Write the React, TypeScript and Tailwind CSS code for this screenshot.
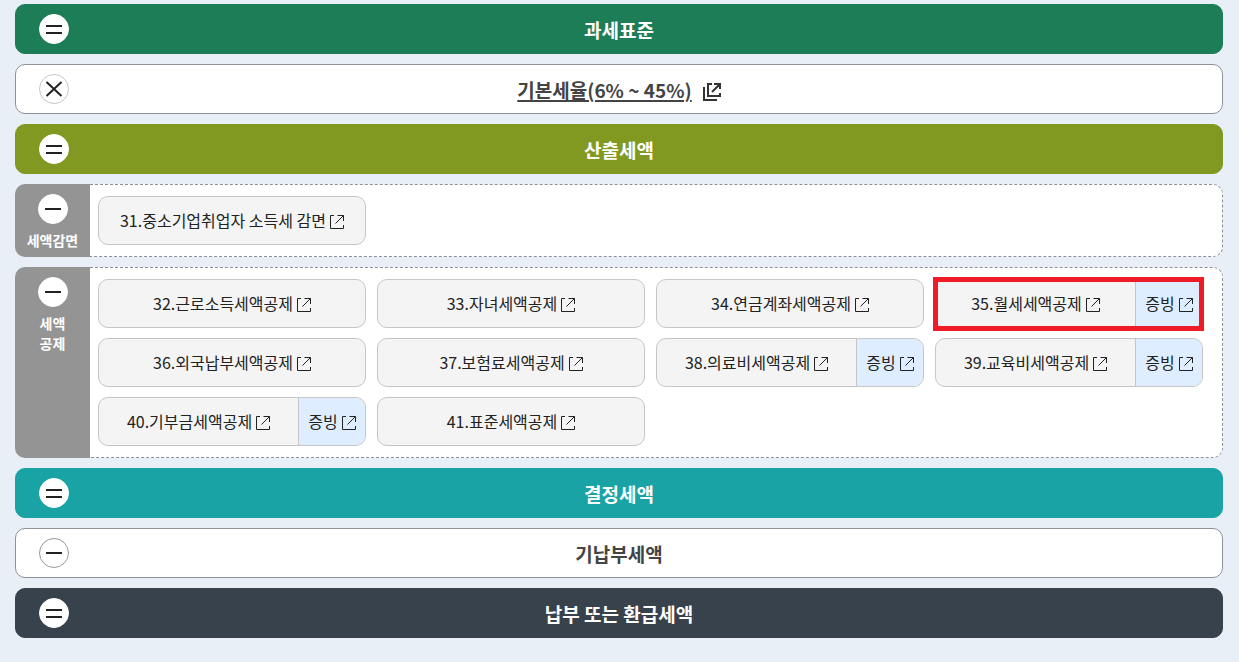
import React from 'react';

type Sign = 'equal' | 'minus' | 'times';

type Item = {
  label: string;
  proof?: boolean;
  marked?: boolean;
};

const reliefItems: Item[] = [{ label: '31.중소기업취업자 소득세 감면' }];

const creditItems: Item[] = [
  { label: '32.근로소득세액공제' },
  { label: '33.자녀세액공제' },
  { label: '34.연금계좌세액공제' },
  { label: '35.월세세액공제', proof: true, marked: true },
  { label: '36.외국납부세액공제' },
  { label: '37.보험료세액공제' },
  { label: '38.의료비세액공제', proof: true },
  { label: '39.교육비세액공제', proof: true },
  { label: '40.기부금세액공제', proof: true },
  { label: '41.표준세액공제' },
];

const signPaths: Record<Sign, string> = {
  equal: 'M7 12H23M7 19H23',
  minus: 'M7 15H23',
  times: 'M7.5 8L22.5 22M22.5 8L7.5 22',
};

function SignIcon({ sign, border = 'border-white' }: { sign: Sign; border?: string }) {
  return (
    <span className={`block size-[30px] shrink-0 rounded-full border bg-white ${border}`}>
      <svg viewBox="1 1 28 28" className="size-7" fill="none" stroke="#222" strokeWidth="2">
        <path d={signPaths[sign]} />
      </svg>
    </span>
  );
}

function LinkIcon() {
  return (
    <svg viewBox="0 0 14 14" className="mt-1 size-3.5 shrink-0" fill="none" stroke="#222">
      <path d="M4 .5H.5V13.5H13.5V10M7.5 .5H13.5V6M13.5 .5L5.5 8.5" />
    </svg>
  );
}

function Bar({
  sign,
  className,
  signBorder,
  children,
}: {
  sign: Sign;
  className: string;
  signBorder?: string;
  children: React.ReactNode;
}) {
  return (
    <div
      className={`grid h-[50px] grid-cols-[30px_1fr_30px] items-center rounded-[10px] border px-[23px] pb-px ${className}`}
    >
      <SignIcon sign={sign} border={signBorder} />
      <h2 className="flex items-center justify-center pt-0.5 text-[19px] leading-7 font-bold">{children}</h2>
    </div>
  );
}

function ItemBox({ label, proof, marked }: Item) {
  return (
    <li className="relative flex h-[49px] rounded-[10px] border border-[#c6c6c6] bg-[#f4f4f4]">
      <a href="#" className="flex flex-1 items-center justify-center gap-1 pb-0.5 whitespace-nowrap">
        {label}
        <LinkIcon />
      </a>
      {proof && (
        <a
          href="#"
          className="flex w-[67px] items-center justify-center gap-1 rounded-r-[9px] border-l border-[#c6c6c6] bg-[#deedff] pb-0.5 whitespace-nowrap"
        >
          증빙
          <LinkIcon />
        </a>
      )}
      {marked && (
        <span className="pointer-events-none absolute -top-[3px] -right-0.5 -bottom-1 -left-[3px] border-5 border-[#ee1c25]" />
      )}
    </li>
  );
}

function Section({ title, items }: { title: React.ReactNode; items: Item[] }) {
  return (
    <section className="flex">
      <div className="flex w-[75px] shrink-0 flex-col items-center rounded-l-[10px] bg-[#949494] pt-[10px] text-center text-white">
        <SignIcon sign="minus" />
        <h3 className="mt-1.5 text-sm leading-5 font-bold">{title}</h3>
      </div>
      <ul className="grid flex-1 grid-cols-4 gap-x-[11px] gap-y-[10px] rounded-r-[10px] border border-l-0 border-dashed border-[#8e8e96] bg-white py-[11px] pr-[19px] pl-2 text-base text-[#222]">
        {items.map((item) => (
          <ItemBox key={item.label} {...item} />
        ))}
      </ul>
    </section>
  );
}

export default function App() {
  return (
    <main className="flex min-h-screen flex-col gap-[10px] bg-[#e9eff7] pt-1 pr-4 pb-6 pl-[15px] font-['Noto_Sans_CJK_KR','Noto_Sans',sans-serif]">
      <Bar sign="equal" className="border-[#1c7d57] bg-[#1c7d57] text-white">
        과세표준
      </Bar>
      <Bar sign="times" signBorder="border-[#c9c3c9]" className="border-[#8e9298] bg-white text-[#444]">
        <a href="#" className="flex items-center gap-[11px]">
          <span className="underline decoration-2 underline-offset-2">기본세율(6% ~ 45%)</span>
          <svg viewBox="0 0 18 18" className="mt-1 size-[18px]" fill="none" stroke="#333" strokeWidth="2">
            <path d="M1 4V17H14M9 1H5V13H17V10M11 1H17V6M17 1L9 9" />
          </svg>
        </a>
      </Bar>
      <Bar sign="equal" className="border-[#829921] bg-[#829921] text-white">
        산출세액
      </Bar>
      <Section title="세액감면" items={reliefItems} />
      <Section
        title={
          <>
            세액
            <br />
            공제
          </>
        }
        items={creditItems}
      />
      <Bar sign="equal" className="border-[#1aa3a4] bg-[#1aa3a4] text-white">
        결정세액
      </Bar>
      <Bar sign="minus" signBorder="border-[#999]" className="border-[#8e9298] bg-white text-[#444]">
        기납부세액
      </Bar>
      <Bar sign="equal" className="border-[#37424d] bg-[#37424d] text-white">
        납부 또는 환급세액
      </Bar>
    </main>
  );
}
